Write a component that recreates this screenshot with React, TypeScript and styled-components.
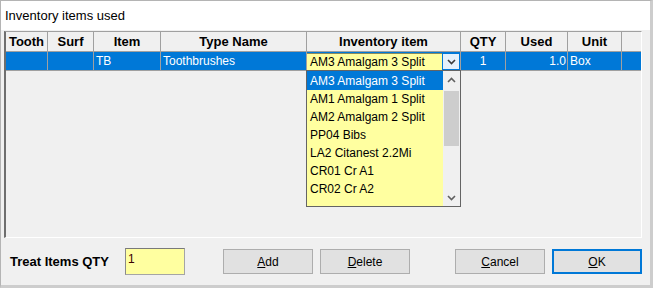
import React from "react";
import styled, { createGlobalStyle } from "styled-components";

const Global = createGlobalStyle`
  html, body { margin: 0; padding: 0; background: #ffffff; }
  * { box-sizing: border-box; }
`;

const COLS = "42px 46px 67px 146px 154px 45px 62px 54px 1fr";
const FONT = `"Liberation Sans", Arial, sans-serif`;

const Window = styled.div`
  width: 653px;
  height: 288px;
  display: flex;
  flex-direction: column;
  background: #f0f0f0;
  border: 1px solid #b4b4b4;
  border-right: 3px solid #cdcdcd;
  border-bottom: 3px solid #cdcdcd;
  font-family: ${FONT};
  color: #000;
`;

const TitleBar = styled.div`
  height: 29px;
  flex: none;
  background: #ffffff;
  display: flex;
  align-items: center;
  padding-left: 4px;
  font-size: 13px;
`;

const Body = styled.div`
  flex: 1;
  display: flex;
  flex-direction: column;
  padding: 1px 8px 0 3px;
`;

const Grid = styled.div`
  height: 207px;
  flex: none;
  position: relative;
  background: #f0f0f0;
  border-top: 1px solid #a0a0a0;
  border-left: 2px solid #6e6e6e;
  border-right: 1px solid #ffffff;
  border-bottom: 1px solid #ffffff;
`;

const HeaderRow = styled.div`
  display: grid;
  grid-template-columns: ${COLS};
  height: 20px;
`;

const HeadCell = styled.div<{ $last?: boolean }>`
  display: flex;
  align-items: center;
  justify-content: center;
  font-weight: bold;
  font-size: 13px;
  background: #f0f0f0;
  border-bottom: 1px solid #a0a0a0;
  border-right: ${(p) => (p.$last ? "none" : "1px solid #a0a0a0")};
  white-space: nowrap;
`;

const DataRow = styled.div`
  display: grid;
  grid-template-columns: ${COLS};
  height: 19px;
`;

const Cell = styled.div<{ $align?: "left" | "center" | "right"; $last?: boolean }>`
  position: relative;
  display: flex;
  align-items: center;
  justify-content: ${(p) =>
    p.$align === "center" ? "center" : p.$align === "right" ? "flex-end" : "flex-start"};
  padding: 0 ${(p) => (p.$align === "right" ? "1px" : "0")} 0 ${(p) => (p.$align === "left" || !p.$align ? "2px" : "0")};
  background: #0078d7;
  color: #ffffff;
  font-size: 12px;
  border-bottom: 1px solid #a0a0a0;
  border-right: ${(p) => (p.$last ? "none" : "1px solid #a0a0a0")};
  white-space: nowrap;
`;

const Combo = styled.div`
  position: absolute;
  left: 0;
  top: 1px;
  right: 0;
  bottom: 0;
  display: flex;
`;

const ComboField = styled.div`
  flex: 1;
  background: #ffffa0;
  border-top: 1px solid #8a8a60;
  color: #000;
  font-size: 12px;
  display: flex;
  align-items: center;
  padding-left: 3px;
`;

const ComboButton = styled.div`
  width: 18px;
  flex: none;
  background: #e5f1fb;
  border: 1px solid #0078d7;
  display: flex;
  align-items: center;
  justify-content: center;
`;

const DropList = styled.div`
  position: absolute;
  left: -1px;
  top: 100%;
  width: 155px;
  height: 137px;
  border: 1px solid #646464;
  background: #ffffa0;
  display: flex;
  z-index: 2;
`;

const Items = styled.div`
  flex: 1;
  display: flex;
  flex-direction: column;
`;

const ListItem = styled.div<{ $selected?: boolean }>`
  height: 18px;
  flex: none;
  display: flex;
  align-items: center;
  padding-left: 3px;
  font-size: 12px;
  color: ${(p) => (p.$selected ? "#ffffff" : "#000000")};
  background: ${(p) => (p.$selected ? "#0078d7" : "transparent")};
  &:first-child {
    height: 19px;
  }
`;

const ScrollBar = styled.div`
  width: 17px;
  flex: none;
  background: #f0f0f0;
  display: flex;
  flex-direction: column;
`;

const ScrollArrow = styled.div`
  height: 17px;
  flex: none;
  display: flex;
  align-items: center;
  justify-content: center;
`;

const ScrollTrack = styled.div`
  flex: 1;
  display: flex;
  flex-direction: column;
  padding-top: 3px;
`;

const Thumb = styled.div`
  height: 55px;
  margin: 0 1px;
  background: #cdcdcd;
`;

const Footer = styled.div`
  flex: 1;
  display: flex;
  align-items: center;
  padding-left: 6px;
`;

const Label = styled.div`
  width: 115px;
  flex: none;
  font-weight: bold;
  font-size: 13px;
  white-space: nowrap;
`;

const QtyInput = styled.div`
  width: 60px;
  height: 27px;
  flex: none;
  background: #ffffa0;
  border: 1px solid #a5a5a5;
  border-top-color: #7a7a7a;
  border-left-color: #8a8a8a;
  font-size: 12px;
  color: #3a0000;
  padding: 3px 0 0 2px;
`;

const Button = styled.div<{ $gap: number; $default?: boolean }>`
  width: 90px;
  height: 25px;
  flex: none;
  margin-left: ${(p) => p.$gap}px;
  background: #e1e1e1;
  border: ${(p) => (p.$default ? "2px solid #0078d7" : "1px solid #adadad")};
  display: flex;
  align-items: center;
  justify-content: center;
  font-size: 12px;
  color: #000;
`;

const Chevron = ({ up, color = "#3c3c3c" }: { up?: boolean; color?: string }) => (
  <svg width="9" height="6" viewBox="0 0 9 6">
    <polyline
      points={up ? "1,5 4.5,1.5 8,5" : "1,1 4.5,4.5 8,1"}
      fill="none"
      stroke={color}
      strokeWidth="1.6"
    />
  </svg>
);

const items = [
  "AM3 Amalgam 3 Split",
  "AM1 Amalgam 1 Split",
  "AM2 Amalgam 2 Split",
  "PP04 Bibs",
  "LA2 Citanest 2.2Mi",
  "CR01 Cr A1",
  "CR02 Cr A2",
];

const headers = ["Tooth", "Surf", "Item", "Type Name", "Inventory item", "QTY", "Used", "Unit"];

export default function App() {
  return (
    <>
      <Global />
      <Window>
        <TitleBar>Inventory items used</TitleBar>
        <Body>
          <Grid>
            <HeaderRow>
              {headers.map((h) => (
                <HeadCell key={h}>{h}</HeadCell>
              ))}
              <HeadCell $last />
            </HeaderRow>
            <DataRow>
              <Cell />
              <Cell />
              <Cell>TB</Cell>
              <Cell>Toothbrushes</Cell>
              <Cell>
                <Combo>
                  <ComboField>AM3 Amalgam 3 Split</ComboField>
                  <ComboButton>
                    <Chevron />
                  </ComboButton>
                </Combo>
                <DropList>
                  <Items>
                    {items.map((it, i) => (
                      <ListItem key={it} $selected={i === 0}>
                        {it}
                      </ListItem>
                    ))}
                  </Items>
                  <ScrollBar>
                    <ScrollArrow>
                      <Chevron up color="#606060" />
                    </ScrollArrow>
                    <ScrollTrack>
                      <Thumb />
                    </ScrollTrack>
                    <ScrollArrow>
                      <Chevron color="#606060" />
                    </ScrollArrow>
                  </ScrollBar>
                </DropList>
              </Cell>
              <Cell $align="center">1</Cell>
              <Cell $align="right">1.0</Cell>
              <Cell>Box</Cell>
              <Cell $last />
            </DataRow>
          </Grid>
          <Footer>
            <Label>Treat Items QTY</Label>
            <QtyInput>1</QtyInput>
            <Button $gap={38}>
              <span>
                <u>A</u>dd
              </span>
            </Button>
            <Button $gap={7}>
              <span>
                <u>D</u>elete
              </span>
            </Button>
            <Button $gap={45}>
              <span>
                <u>C</u>ancel
              </span>
            </Button>
            <Button $gap={7} $default>
              <span>
                <u>O</u>K
              </span>
            </Button>
          </Footer>
        </Body>
      </Window>
    </>
  );
}
